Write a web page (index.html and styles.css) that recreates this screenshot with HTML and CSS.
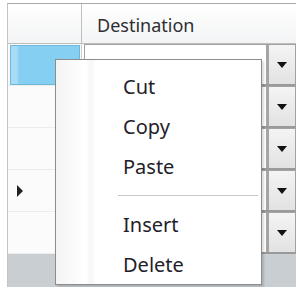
FILE: index.html
```html
<!DOCTYPE html>
<html>
<head>
<meta charset="utf-8">
<link rel="stylesheet" href="styles.css">
</head>
<body>
<div class="grid">
  <div class="row header">
    <div class="rh"></div>
    <div class="hc">Destination</div>
  </div>
  <div class="row">
    <div class="rh"><div class="sel"></div></div>
    <div class="cell"><div class="combo"><div class="val"></div><div class="btn"><span class="tri"></span></div></div></div>
  </div>
  <div class="row">
    <div class="rh"></div>
    <div class="cell"><div class="combo"><div class="val"></div><div class="btn"><span class="tri"></span></div></div></div>
  </div>
  <div class="row">
    <div class="rh"></div>
    <div class="cell"><div class="combo"><div class="val"></div><div class="btn"><span class="tri"></span></div></div></div>
  </div>
  <div class="row">
    <div class="rh"><span class="ptr"></span></div>
    <div class="cell"><div class="combo"><div class="val"></div><div class="btn"><span class="tri"></span></div></div></div>
  </div>
  <div class="row">
    <div class="rh"></div>
    <div class="cell"><div class="combo"><div class="val"></div><div class="btn"><span class="tri"></span></div></div></div>
  </div>
  <div class="empty"></div>
</div>
<div class="menu">
  <div class="item">Cut</div>
  <div class="item">Copy</div>
  <div class="item">Paste</div>
  <div class="sep"></div>
  <div class="item">Insert</div>
  <div class="item">Delete</div>
</div>
</body>
</html>
```
FILE: styles.css
```css
html, body {
  margin: 0;
  padding: 0;
  background: #ffffff;
  width: 304px;
  height: 287px;
  overflow: hidden;
  font-family: "Noto Sans", "Open Sans", sans-serif;
}
.grid {
  margin: 3px 0 0 7px;
  width: 289px;
  height: 284px;
  border-top: 1px solid #a9a9a9;
  border-left: 1px solid #c4c4c4;
  display: flex;
  flex-direction: column;
  box-sizing: border-box;
}
.row {
  display: flex;
  height: 42px;
  flex: none;
}
.row.header {
  height: 39px;
  background: linear-gradient(#ffffff, #f3f4f5);
  border-bottom: 1px solid #bdbdbd;
}
.rh {
  width: 74px;
  flex: none;
  border-right: 1px solid #d0d0d0;
  border-bottom: 1px solid #ececec;
  box-sizing: border-box;
  position: relative;
  display: flex;
  align-items: center;
  background: #fbfbfb;
}
.header .rh {
  border-bottom: none;
  background: transparent;
  border-right: 1px solid #c0c0c0;
}
.hc {
  flex: 1;
  padding-left: 15px;
  display: flex;
  align-items: center;
  font-size: 18px;
  color: #2e2e33;
  padding-top: 2px;
}
.sel {
  margin: 1px 0 0 2px;
  width: 70px;
  height: 40px;
  background: linear-gradient(90deg, #a7dcf5 0px, #a7dcf5 6px, #84cff2 8px, #84cff2 100%);
  border: 1px solid #6fb7da;
  box-sizing: border-box;
}
.ptr {
  margin-left: 9px;
  width: 0;
  height: 0;
  border-top: 6px solid transparent;
  border-bottom: 6px solid transparent;
  border-left: 6px solid #222;
}
.cell {
  flex: 1;
  padding: 0 0 0 2px;
  display: flex;
}
.combo {
  flex: 1;
  display: flex;
  border: 1px solid #a2a2a2;
  border-bottom: 2px solid #9a9a9a;
  background: #fff;
}
.val {
  flex: 1;
}
.btn {
  width: 26px;
  border-left: 3px solid #a5a5a5;
  background: linear-gradient(#f4f4f4, #e2e2e2);
  display: flex;
  align-items: center;
  justify-content: center;
}
.tri {
  width: 0;
  height: 0;
  border-left: 5px solid transparent;
  border-right: 5px solid transparent;
  border-top: 6px solid #111;
}
.empty {
  flex: 1;
  background: #c8ced2;
}
.menu {
  position: absolute;
  left: 55px;
  top: 59px;
  width: 207px;
  height: 226px;
  box-sizing: border-box;
  border: 1px solid #8c8c8c;
  background: linear-gradient(90deg, #f4f4f4 0px, #ffffff 30px, #f6f6f6 34px, #ffffff 40px, #ffffff 100%);
  padding-top: 6px;
  box-shadow: 2px 2px 2px rgba(0,0,0,0.15);
}
.item {
  height: 40px;
  display: flex;
  align-items: center;
  padding-left: 67px;
  font-size: 20px;
  color: #231e29;
}
.sep {
  height: 18px;
  margin-left: 62px;
  margin-right: 3px;
  display: flex;
  align-items: center;
}
.sep::after {
  content: "";
  flex: 1;
  height: 1px;
  background: #c8c8c8;
}
```
